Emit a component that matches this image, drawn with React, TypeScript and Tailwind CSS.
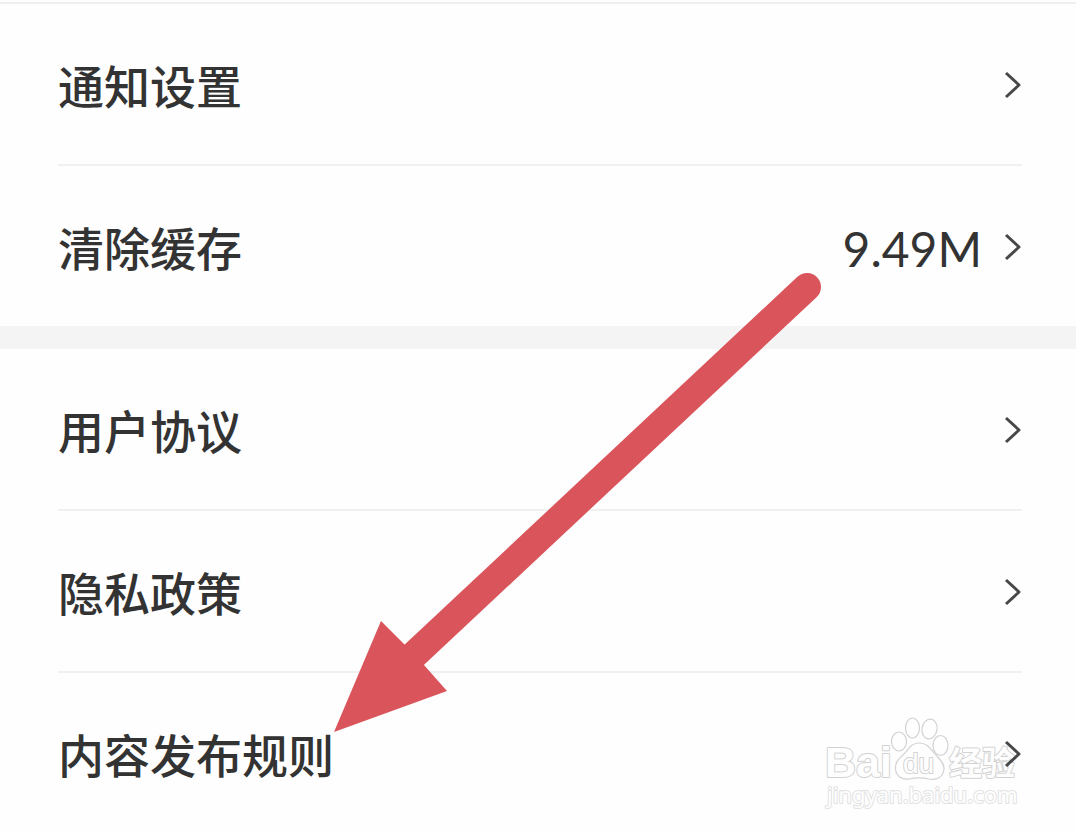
import React from "react";

type Item = { label: string; value?: string };

const groups: Item[][] = [
  [{ label: "通知设置" }, { label: "清除缓存", value: "9.49M" }],
  [{ label: "用户协议" }, { label: "隐私政策" }, { label: "内容发布规则" }],
];

function Chevron() {
  return (
    <svg
      aria-hidden="true"
      className="h-8 w-5 shrink-0"
      viewBox="0 0 20 32"
      fill="none"
      stroke="#484848"
      strokeWidth="3"
    >
      <path d="M4 5 L17 17 L4 29" strokeLinejoin="round" />
    </svg>
  );
}

function Row({ label, value }: Item) {
  return (
    <button
      type="button"
      className="flex h-40 w-full items-center justify-between text-left text-[#333333]"
    >
      <span className="text-[46px] leading-none font-medium">{label}</span>
      <span className="flex items-center gap-5">
        {value && (
          <span className="pt-1.5 font-['Lato',sans-serif] text-[48px] leading-none">
            {value}
          </span>
        )}
        <Chevron />
      </span>
    </button>
  );
}

function Arrow() {
  return (
    <svg
      aria-hidden="true"
      className="pointer-events-none absolute top-[270px] left-[330px] h-[466px] w-[494px]"
      viewBox="330 270 494 466"
    >
      <path d="M414 655 L807 287" stroke="#da555b" strokeWidth="28" strokeLinecap="round" />
      <path d="M334 732 L381 621 L405 645 L424 665 L447 691 Z" fill="#da555b" />
    </svg>
  );
}

function Watermark() {
  return (
    <svg
      aria-label="Baidu 经验"
      className="pointer-events-none absolute right-[52px] bottom-[20px] h-[100px] w-[204px]"
      viewBox="820 712 204 100"
      fill="#fefefe"
      stroke="#d2d2d2"
      strokeWidth="1.2"
    >
      <ellipse cx="899" cy="740.5" rx="7.5" ry="9.5" />
      <ellipse cx="912.5" cy="727" rx="7" ry="10" />
      <ellipse cx="929.5" cy="728" rx="7.5" ry="10" transform="rotate(10 929.5 728)" />
      <ellipse cx="940.5" cy="744.5" rx="7.5" ry="10" />
      <path d="M919 742 C912 742 909 747 905 752 C900 757 895 760 895.500 768 C896 775 902 779 909 778 C916 776.500 922 776.500 929 778 C937 779.500 943 776 944 768 C944.500 761 938 757 934 752 C930 747 927 742 919 742 Z" />
      <g strokeWidth="2" paintOrder="stroke" strokeLinejoin="round">
        <g fontFamily="'Liberation Sans', sans-serif">
          <text x="825" y="776" fontSize="43" fontWeight="700">Bai</text>
          <text x="903" y="772" fontSize="28">du</text>
        </g>
        <text x="949" y="774" fontSize="33" fontWeight="700" fontFamily="'Noto Sans CJK SC', sans-serif">
          经验
        </text>
        <text x="827" y="802" fontSize="22" stroke="#e2e2e2" fontFamily="'Noto Sans', sans-serif">
          jingyan.baidu.com
        </text>
      </g>
    </svg>
  );
}

export default function App() {
  return (
    <main className="relative min-h-screen overflow-hidden bg-[#fefefe] pt-0.5 font-['Noto_Sans_CJK_SC',sans-serif]">
      <Watermark />
      <div className="relative border-t-2 border-[#efefef]">
        {groups.map((items, index) => (
          <section key={index}>
            {index > 0 && <div className="h-[23px] bg-[#f4f4f4]" />}
            <ul className="mr-[54px] ml-[58px] divide-y-2 divide-[#f0f0f0]">
              {items.map((item) => (
                <li key={item.label}>
                  <Row {...item} />
                </li>
              ))}
            </ul>
          </section>
        ))}
      </div>
      <Arrow />
    </main>
  );
}
